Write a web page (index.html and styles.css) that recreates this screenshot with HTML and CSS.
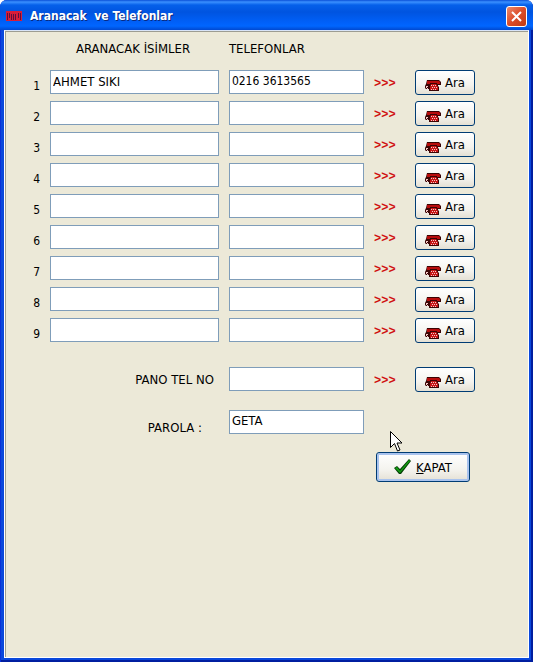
FILE: index.html
```
<!DOCTYPE html>
<html lang="tr">
<head>
  <meta charset="UTF-8">
  <title>Aranacak ve Telefonlar</title>
  <meta name="viewport" content="width=device-width, initial-scale=1.0">
  <link rel="stylesheet" href="styles.css">
</head>
<body>

  <svg class="sprite" aria-hidden="true">
    <symbol id="phone" viewBox="0 0 16 11">
      <path fill="#3a0404" d="M2 0h12l2 2v3h-3v1l1 1v4H4V9H1L0 8V6l1-2z"/>
      <path fill="#b80c0c" d="M2 1h12l1 1v2h-3V3H5v1H2z"/>
      <path fill="#c81414" d="M6 4h5l2 3v3H5V7z"/>
      <path fill="#f5c8c8" d="M6 5h1v1H6zm2 0h1v1H8zm2 0h1v1h-1zM7 7h1v1H7zm2 0h1v1H9zm2 0h1v1h-1zM6 9h1v1H6zm2 0h1v1H8zm2 0h1v1h-1zM1 6h2v1H2v1H1zm1 2h1v1H2z"/>
    </symbol>
  </svg>

  <div class="window">
    <header class="titlebar">
      <svg class="logo" width="16" height="10" viewBox="0 0 16 10">
        <path fill="#d81c38" d="M0 0h16v10H0z"/>
        <path fill="none" stroke="#5a1040" d="M1.500 2v7M3.500 2v5M5.500 3v6M7.500 3v6M9.500 3v6M12.500 2v5M14.500 2v7"/>
      </svg>
      <h1>Aranacak&nbsp; ve Telefonlar</h1>
      <button class="close" type="button" aria-label="Kapat">
        <svg width="11" height="11" viewBox="0 0 11 11"><path stroke="#fff" stroke-width="2" d="M1 1l9 9M10 1l-9 9"/></svg>
      </button>
    </header>

    <form class="client">
      <div class="row head">
        <span class="names">ARANACAK İSİMLER</span>
        <span>TELEFONLAR</span>
      </div>

      <div id="list" class="list"></div>

      <div class="row pano">
        <label class="wide" for="pano">PANO TEL NO</label>
        <input id="pano" type="text">
        <span class="arrows">&gt;&gt;&gt;</span>
        <button class="btn" type="button"><svg width="16" height="11"><use href="#phone"/></svg>Ara</button>
      </div>

      <div class="row parola">
        <label class="wide" for="parola">PAROLA :</label>
        <input id="parola" type="text" value="GETA">
      </div>

      <div class="actions">
        <button class="btn kapat" type="button">
          <svg width="18" height="16" viewBox="0 0 18 16">
            <path fill="#053f05" d="M0 9l3-2 3 3L15 0l2 2L7 15H5z"/>
            <path fill="#12a012" d="M1 9l2-1 3 4L15 1l1 1L6 14z"/>
          </svg>
          <span><u>K</u>APAT</span>
        </button>
        <svg class="cursor" width="13" height="22" viewBox="0 0 13 22">
          <path fill="#fff" stroke="#000" d="M.5.5v16l4-4 3 7.500 2.500-1-3-7h5z"/>
        </svg>
      </div>
    </form>
  </div>

  <script>
    const people = [{ name: "AHMET SIKI", phone: "0216 3613565" }];
    const list = document.getElementById("list");

    for (let i = 1; i <= 9; i++) {
      const person = people[i - 1] || { name: "", phone: "" };
      const row = document.createElement("div");
      row.className = "row";
      row.innerHTML = `
        <label class="num" for="name${i}">${i}</label>
        <input id="name${i}" type="text" value="${person.name}">
        <input class="tel" type="text" aria-label="Telefon ${i}" value="${person.phone}">
        <span class="arrows">&gt;&gt;&gt;</span>
        <button class="btn" type="button"><svg width="16" height="11"><use href="#phone"/></svg>Ara</button>
      `;
      list.appendChild(row);
    }
  </script>

</body>
</html>
```
FILE: styles.css
```
* {
  box-sizing: border-box;
}

body {
  margin: 0;
  background: #fff;
  font-family: "DejaVu Sans Condensed", "Noto Sans", sans-serif;
  font-size: 13px;
  color: #000;
}

.sprite {
  position: absolute;
  width: 0;
  height: 0;
}

.window {
  display: flex;
  flex-direction: column;
  min-height: 100vh;
  padding: 0 4px 4px;
  background: #0a48dc;
  border-radius: 7px 7px 0 0;
  box-shadow: inset 1px 0 #0831d9, inset -2px -2px #001ea0;
}

.titlebar {
  display: flex;
  align-items: center;
  height: 30px;
  margin: 0 -4px;
  padding: 2px 6px 0;
  border-radius: 7px 7px 0 0;
  background: linear-gradient(#0a50d8 0, #3a90ff 2px, #0560ea 5px, #0054e0 12px, #0060f8 22px, #0066ff 26px, #0048d0 30px);
}

.titlebar h1 {
  flex: 1;
  margin: 0 0 0 8px;
  font-size: 12px;
  font-weight: bold;
  color: #fff;
  text-shadow: 1px 1px #0a2a80;
}

.close {
  display: flex;
  align-items: center;
  justify-content: center;
  width: 21px;
  height: 21px;
  padding: 0;
  border: 1px solid #fff;
  border-radius: 3px;
  background: linear-gradient(135deg, #ec8a6c, #dc4c28 50%, #c03a14);
}

.client {
  flex: 1;
  padding: 10px 53px 20px 27px;
  background: #ece9d8;
  border: 1px solid #fff;
  border-top-color: #d8e4f8;
  box-shadow: inset 1px 1px #9d9d92;
}

.row {
  display: grid;
  grid-template-columns: 8px 5fr 4fr 31px 60px;
  column-gap: 10px;
  align-items: center;
}

.head {
  line-height: 16px;
  margin-bottom: 13px;
}

.names {
  grid-column: 1 / 3;
  padding-left: 44px;
}

.list {
  display: grid;
  row-gap: 7px;
}

.num {
  align-self: end;
  font-size: 12px;
  line-height: 16px;
  text-align: right;
}

.wide {
  grid-column: 1 / 3;
  padding-right: 5px;
  text-align: right;
}

input {
  width: 100%;
  min-width: 0;
  height: 24px;
  padding: 0 2px 2px;
  border: 1px solid #7f9db9;
  background: #fff;
  font: inherit;
  color: inherit;
}

.tel {
  font-size: 12px;
}

.arrows {
  padding-top: 4px;
  font-family: "Liberation Mono", monospace;
  font-size: 12px;
  font-weight: bold;
  color: #d01010;
}

.btn {
  display: flex;
  align-items: center;
  justify-content: center;
  gap: 4px;
  height: 25px;
  margin-bottom: -1px;
  padding: 0;
  border: 1px solid #003c74;
  border-radius: 3px;
  background: linear-gradient(#fff, #f4f3ee 60%, #e4e0d4);
  font: inherit;
  color: inherit;
}

.btn svg {
  margin-top: 6px;
}

.pano {
  margin-top: 25px;
}

.parola {
  margin-top: 17px;
}

.parola .wide {
  padding: 12px 17px 0 0;
}

.actions {
  position: relative;
  display: flex;
  justify-content: flex-end;
  margin-top: 17px;
  padding-right: 5px;
}

.kapat {
  width: 94px;
  height: 30px;
  box-shadow: inset 0 0 0 2px #a9c3ee;
}

.kapat svg {
  margin-top: 0;
}

.cursor {
  position: absolute;
  top: -21px;
  right: 72px;
}
```
